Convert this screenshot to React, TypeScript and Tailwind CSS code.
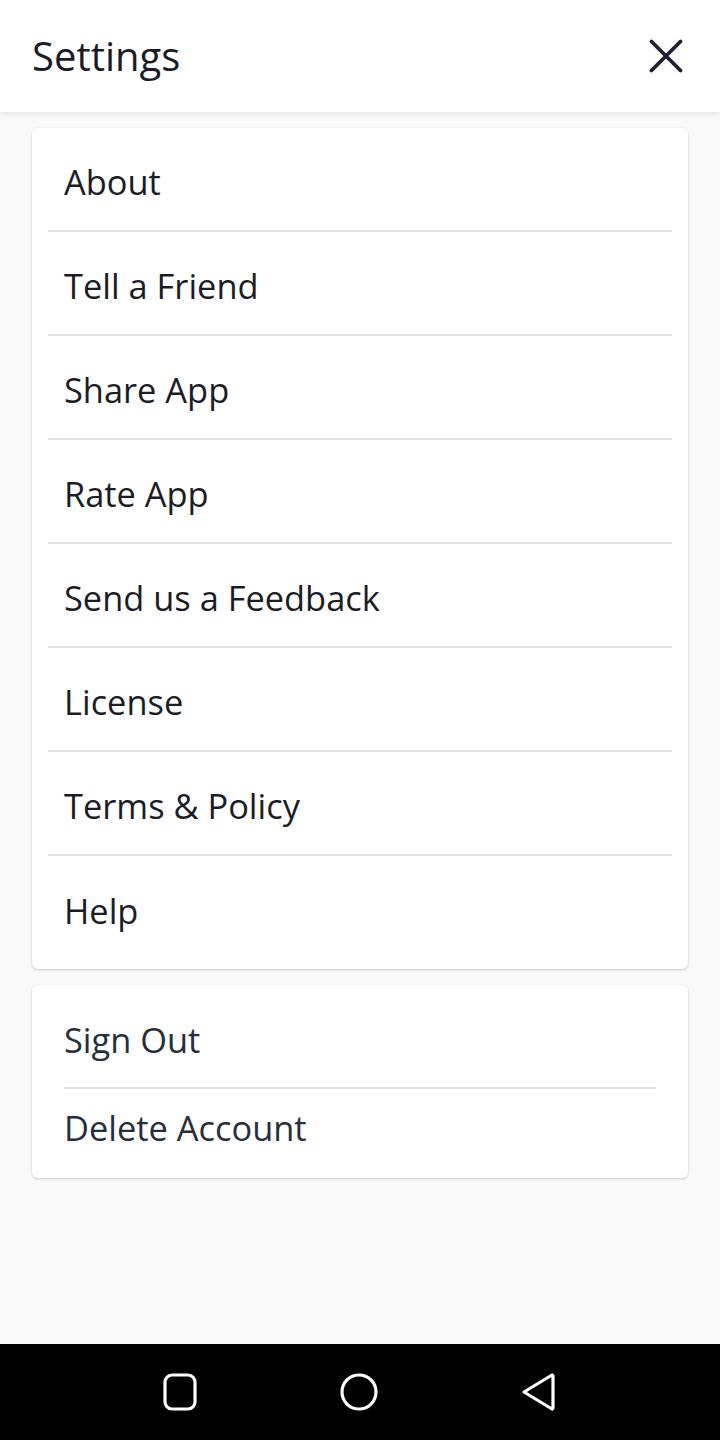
import React from "react"

const mainItems = ["About", "Tell a Friend", "Share App", "Rate App", "Send us a Feedback", "License", "Terms & Policy", "Help"]

export default function App() {
  return (
    <div className="h-[1440px] flex flex-col bg-[#f9f9f9] text-[#1b1d26] font-['Open_Sans',sans-serif]">
      <header className="h-[112px] shrink-0 bg-white flex items-center justify-between pl-8 pr-[37px] shadow-[0_2px_5px_rgba(0,0,0,0.08)] relative z-10">
        <h1 className="text-[40px] leading-none">Settings</h1>
        <svg width="34" height="34" viewBox="0 0 34 34" fill="none" stroke="#1f2130" strokeWidth="3.8" strokeLinecap="round">
          <path d="M2.5 2.5 31.5 31.5M31.5 2.5 2.5 31.5" />
        </svg>
      </header>

      <main className="flex-1 px-8 pt-4 flex flex-col gap-4">
        <div className="bg-white rounded-md shadow-[0_1px_3px_rgba(0,0,0,0.18)] pb-[9px]">
          {mainItems.map((item, i) => (
            <div
              key={item}
              className={
                i < mainItems.length - 1
                  ? "mx-4 px-4 pt-[6px] h-[104px] flex items-center border-b-2 border-[#e0e0e0] text-[34.4px]"
                  : "mx-4 px-4 pt-[6px] h-[104px] flex items-center text-[34.4px]"
              }
            >
              {item}
            </div>
          ))}
        </div>

        <div className="bg-white rounded-md shadow-[0_1px_3px_rgba(0,0,0,0.18)] pb-[17px] text-[#262f3c]">
          <div className="mx-8 pt-[8px] h-[104px] flex items-center border-b-2 border-[#e0e0e0] text-[34.4px]">Sign Out</div>
          <div className="mx-8 pt-[6px] h-[72px] flex items-center text-[34.4px]">Delete Account</div>
        </div>
      </main>

      <nav className="h-[96px] shrink-0 bg-black flex items-center justify-center gap-[141px]">
        <svg width="36" height="40" viewBox="0 0 36 40" fill="none" stroke="white" strokeWidth="3.2">
          <rect x="3" y="3" width="30" height="34" rx="7" />
        </svg>
        <svg width="40" height="40" viewBox="0 0 40 40" fill="none" stroke="white" strokeWidth="3.2">
          <circle cx="20" cy="20" r="17" />
        </svg>
        <svg width="38" height="40" viewBox="0 0 38 40" fill="none" stroke="white" strokeWidth="3.2" strokeLinejoin="round">
          <path d="M4 20 32 3 33 4 33 36 32 37Z" />
        </svg>
      </nav>
    </div>
  )
}
